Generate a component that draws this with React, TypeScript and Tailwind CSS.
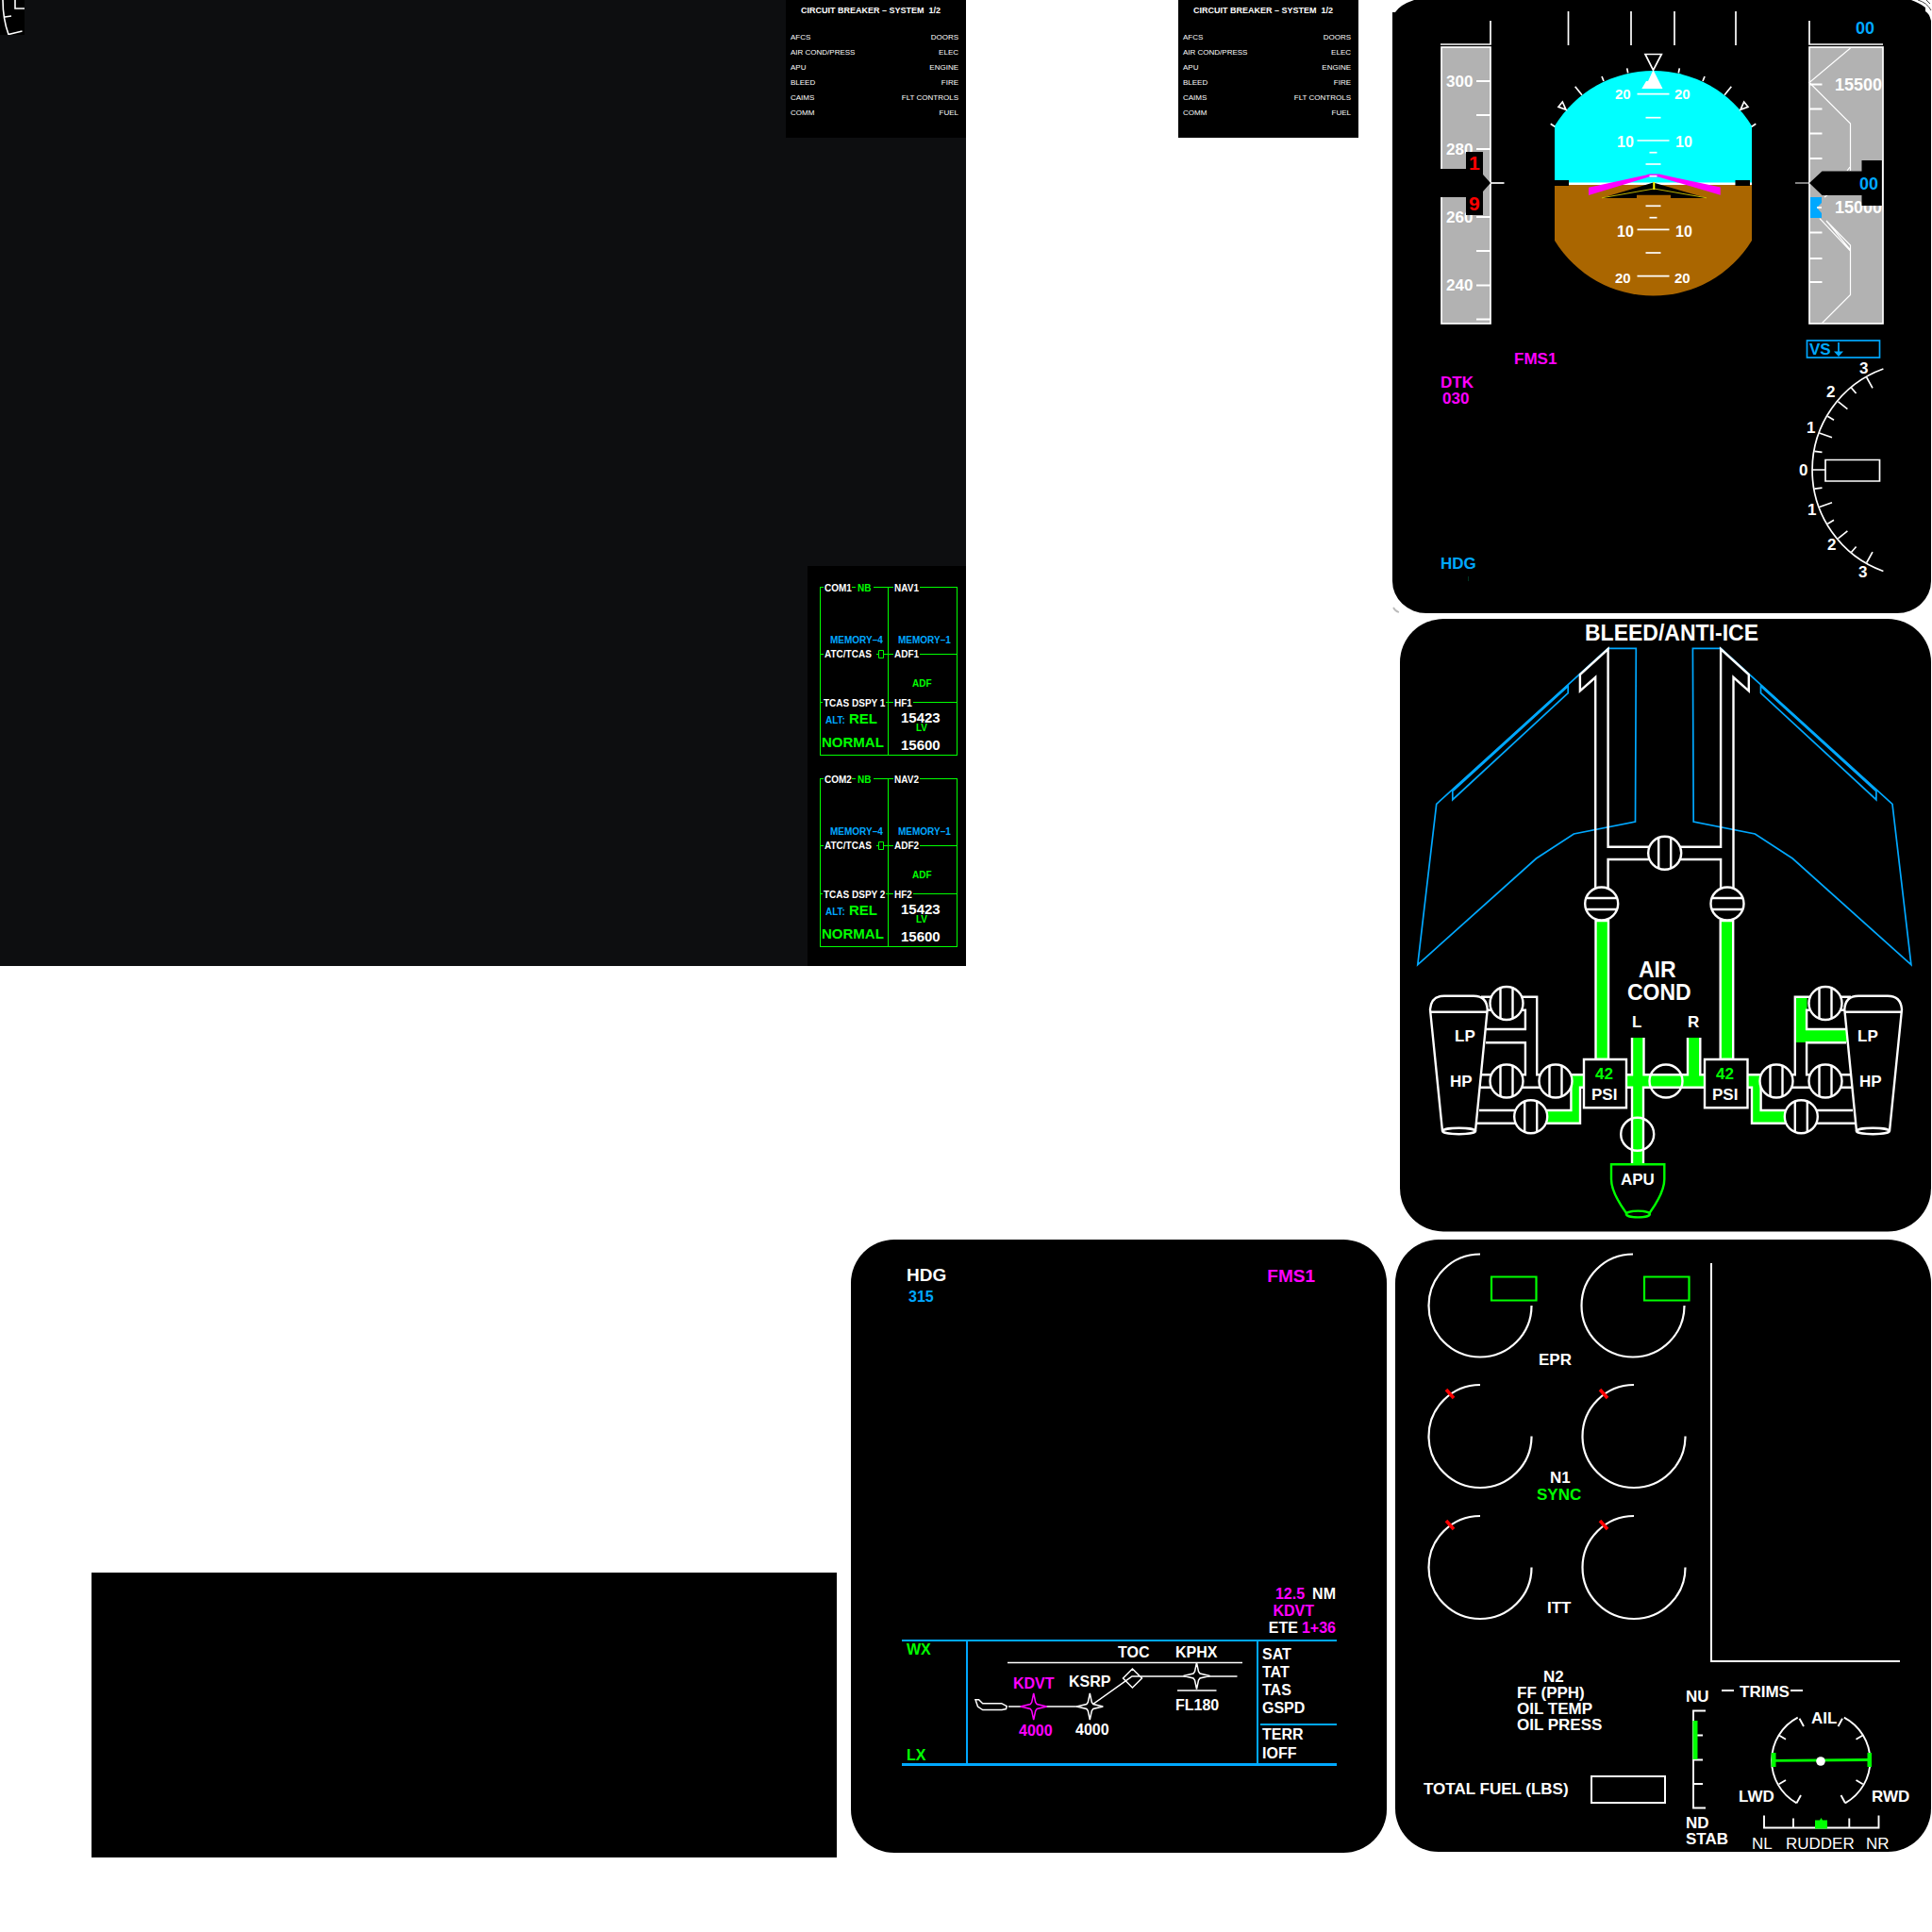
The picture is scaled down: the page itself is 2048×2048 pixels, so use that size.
import React from "react";

const BLUE = "#00a8ff";
const GREEN = "#00ff00";
const MAGENTA = "#ff00ff";

type LabelProps = {
  x: number;
  y: number;
  fill?: string;
  className?: string;
  children: React.ReactNode;
};

function Label({ x, y, fill = "#fff", className = "text-[17px] font-bold", children }: LabelProps) {
  return (
    <text x={x} y={y} fill={fill} stroke="none" className={className}>
      {children}
    </text>
  );
}

const BREAKERS: [string, string][] = [
  ["AFCS", "DOORS"],
  ["AIR COND/PRESS", "ELEC"],
  ["APU", "ENGINE"],
  ["BLEED", "FIRE"],
  ["CAIMS", "FLT CONTROLS"],
  ["COMM", "FUEL"],
];

function BreakerPanel() {
  return (
    <section className="h-[146px] w-[191px] bg-black text-white">
      <h2 className="whitespace-pre pl-4 pt-[3px] text-[9px] leading-4 font-bold">
        {"CIRCUIT BREAKER – SYSTEM  1/2"}
      </h2>
      <table className="mt-[13px] w-full text-[8px] leading-4 text-white">
        <tbody>
          {BREAKERS.map(([left, right]) => (
            <tr key={left}>
              <td className="p-0 pl-[5px] text-left">{left}</td>
              <td className="p-0 pr-2 text-right">{right}</td>
            </tr>
          ))}
        </tbody>
      </table>
    </section>
  );
}

function RadioUnit({ n }: { n: number }) {
  return (
    <section className="grid h-[179px] grid-cols-[72px_1fr] grid-rows-[70px_51px_1fr] border border-[#00ff00] text-[10px] font-bold whitespace-nowrap">
      <div className="relative border-r border-[#00ff00]">
        <span className="absolute -top-1 left-[3px] flex bg-black px-px leading-[10px] text-white">
          COM{n}
          <span className="mt-[3px] h-px w-1 bg-[#00ff00]" />
          <span className="px-[2px] text-[#00ff00]">NB</span>
        </span>
        <span className="absolute bottom-[7px] left-[10px] text-[#00a8ff]">MEMORY–4</span>
      </div>
      <div className="relative">
        <span className="absolute -top-1 left-[5px] bg-black px-px leading-[10px] text-white">NAV{n}</span>
        <span className="absolute bottom-[7px] left-[10px] text-[#00a8ff]">MEMORY–1</span>
      </div>
      <div className="relative border-r border-[#00ff00]">
        <span className="absolute top-0 left-0 h-px w-[3px] bg-[#00ff00]" />
        <span className="absolute -top-[7px] left-[3px] px-px leading-4 text-white">ATC/TCAS</span>
        <svg viewBox="0 0 12 10" className="absolute -top-[5px] right-0 h-[10px] w-3" fill="none" stroke={GREEN}>
          <path d="M0 5.500h2.500M8 5.500h4M2.500 1.500h5v8h-5z" />
        </svg>
      </div>
      <div className="relative border-t border-[#00ff00] pt-[23px] pl-[25px] leading-4 text-[#00ff00]">
        <span className="absolute -top-[5px] left-[5px] bg-black px-px leading-[10px] text-white">ADF{n}</span>
        ADF
      </div>
      <div className="relative border-t border-r border-[#00ff00] pl-[1px] text-[#00ff00]">
        <span className="absolute -top-[5px] left-[2px] bg-black px-px leading-[11px] text-white">TCAS DSPY {n}</span>
        <p className="mt-[7px] pl-1 text-[15px] leading-5">
          <span className="pr-1 text-[10px] text-[#00a8ff]">ALT:</span>REL
        </p>
        <p className="mt-[3px] text-[15px] leading-5">NORMAL</p>
      </div>
      <div className="relative border-t border-[#00ff00] pl-[13px] text-white">
        <span className="absolute -top-[5px] left-[5px] bg-black px-px leading-[11px] text-white">HF{n}</span>
        <p className="mt-[10px] text-[15px] leading-3">15423</p>
        <p className="pl-4 leading-[9px] text-[#00ff00]">LV</p>
        <p className="mt-[6px] text-[15px] leading-4">15600</p>
      </div>
    </section>
  );
}

function Bench() {
  return (
    <div className="flex aspect-square w-full justify-between bg-[#0d0e10]">
      <svg viewBox="0 0 26 37" className="h-[37px] w-[26px] bg-black" fill="none" stroke="#fff" strokeWidth="1.6">
        <path d="M3 0Q3 20 9 36.500L23.500 33M5 18L12 17M16 0V9H26" />
      </svg>
      <div className="flex flex-col items-end justify-between">
        <BreakerPanel />
        <div className="flex w-[168px] flex-col gap-6 bg-black pt-[22px] pr-[9px] pb-5 pl-[13px]">
          <RadioUnit n={1} />
          <RadioUnit n={2} />
        </div>
      </div>
    </div>
  );
}

/* Primary flight display */

function LadderLine({ y, half }: { y: number; half: number }) {
  return <path d={`M${1752.500 - half} ${y}h${half * 2}`} />;
}

function BankMarks() {
  return (
    <path d="M1724.700 72.300l1 5M1698 81l2 5M1669.700 91.700l7.300 9M1656.300 108l-4.300 5.300l8 3zM1643.700 131.300l4.500 3" />
  );
}

function VerticalSpeedTicks() {
  return (
    <path d="M1978.700 400L1985 411.300M1948.400 425.700L1958.400 433.700M1928.500 459L1942 463.700M1962.400 411L1967.600 417M1937.400 441.300L1944 445.300M1923.400 478.300L1931.500 479.300" />
  );
}

function FlightDisplay() {
  return (
    <svg viewBox="1476 0 572 656" className="block w-full" fill="none" stroke="#fff" strokeWidth="1.700" role="img" aria-label="Primary flight display">
      <path d="M1499 0Q1484 5 1479 13H1476V616A36 34 0 0 0 1512 650H2011A36 34 0 0 0 2047 616V22Q2045 14 2041 12V8Q2036 4 2026 0Z" fill="#000" stroke="none" />
      <path d="M2033 0Q2043 3 2047 11M2042 0L2046 4" stroke="#444" strokeWidth="1" />
      <path d="M1477 644Q1479 648 1483 649" stroke="#bbb" />

      <path d="M1662.500 12V48M1729 12V48M1775 12V48M1840 12V48M1580 22V47H1527M1918 22V47H1996" />

      <rect x="1528" y="50" width="52" height="293" fill="#b2b2b2" />
      <path d="M1565 86h15M1565 122h15M1565 158h15M1565 230h15M1565 266h15M1565 302.500h15M1565 338.500h15" strokeWidth="2" />
      <Label x={1533} y={92}>300</Label>
      <Label x={1533} y={164}>280</Label>
      <Label x={1533} y={236}>260</Label>
      <Label x={1533} y={308}>240</Label>
      <path d="M1526 179H1554V161H1572V185L1580 194L1572 203V228H1554V209H1526Z" fill="#000" stroke="none" />
      <path d="M1580 194h14.500" />
      <Label x={1557} y={180} fill="#f00" className="text-[21px] font-bold">1</Label>
      <Label x={1557} y={223} fill="#f00" className="text-[21px] font-bold">9</Label>

      <rect x="1918" y="50" width="78" height="293" fill="#b2b2b2" />
      <path d="M1961.500 51L1918 87.500L1961.500 131V181M1929 231.700L1961.500 266M1936 234L1961.500 260V312.500L1931.500 342.500M1936 234L1961.500 265M1958 181l3-4M1934 209l4-3" strokeWidth="1.200" />
      <path d="M1918 89.500h13.500M1918 115.500h13.500M1918 141.500h13.500M1918 168h13.500M1918 246.500h13.500M1918 274h13.500M1918 299h13.500" strokeWidth="2" />
      <Label x={1945} y={96} className="text-[18px] font-bold">15500</Label>
      <Label x={1945} y={226} className="text-[18px] font-bold">15000</Label>
      <path d="M1918 194L1931.500 181.500H1973.500V170H1996V218H1973.500V207H1931.500Z" fill="#000" stroke="none" />
      <path d="M1903 194H1918M1995.500 170V218" strokeWidth="1.200" />
      <path d="M1919 209H1931V215L1926 220L1931 226V231H1919Z" fill={BLUE} stroke="none" />
      <path d="M1926 220h5" />
      <Label x={1967} y={36} fill={BLUE} className="text-[18px] font-bold">00</Label>
      <Label x={1971} y={201} fill={BLUE} className="text-[18px] font-bold">00</Label>

      <path d="M1648 195V133.500A122.500 122.500 0 0 1 1857 133.500V195Z" fill="#00ffff" stroke="none" />
      <path d="M1648 195V255A122.500 122.500 0 0 0 1857 255V195Z" fill="#aa6600" stroke="none" />
      <path d="M1648 194.700H1857" strokeWidth="2.500" />
      <path d="M1648 191h15v6h-15zM1839.500 191h15.500v6h-15.500z" fill="#000" stroke="none" />
      <LadderLine y={99.700} half={17} />
      <LadderLine y={124.700} half={8} />
      <LadderLine y={149} half={17} />
      <LadderLine y={161.700} half={4} />
      <LadderLine y={174} half={8} />
      <LadderLine y={218.300} half={8} />
      <LadderLine y={230.700} half={4} />
      <LadderLine y={243.300} half={17} />
      <LadderLine y={268} half={8} />
      <LadderLine y={292.700} half={17} />
      <Label x={1712} y={105} className="text-[15px] font-bold">20</Label>
      <Label x={1775} y={105} className="text-[15px] font-bold">20</Label>
      <Label x={1714} y={156} className="text-[16px] font-bold">10</Label>
      <Label x={1776} y={156} className="text-[16px] font-bold">10</Label>
      <Label x={1714} y={251} className="text-[16px] font-bold">10</Label>
      <Label x={1776} y={251} className="text-[16px] font-bold">10</Label>
      <Label x={1712} y={300} className="text-[15px] font-bold">20</Label>
      <Label x={1775} y={300} className="text-[15px] font-bold">20</Label>
      <path d="M1744 57.500H1761.300L1752.500 74.500Z" />
      <path d="M1752.500 74L1762.500 94H1740.300L1745 86L1747 86Z" fill="#fff" stroke="none" />
      <BankMarks />
      <g transform="translate(3505 0) scale(-1 1)">
        <BankMarks />
      </g>
      <path d="M1684 198.700L1745 185.500L1748 184.500H1759L1763 185.500L1823.700 198.500V206.700L1758 187.500H1748L1684 207Z" fill={MAGENTA} stroke="none" />
      <LadderLine y={186.700} half={4} />
      <path d="M1752.500 193.500L1698 210H1735V206.700H1771V210H1809Z" fill="#000" stroke="none" />
      <path d="M1698 209.800L1753.300 200L1809 209.800" stroke="#d4c800" strokeWidth="0.900" />
      <path d="M1753.300 193V201" stroke="#ffff00" strokeWidth="2" />

      <Label x={1605} y={386} fill={MAGENTA}>FMS1</Label>
      <Label x={1527} y={411} fill={MAGENTA}>DTK</Label>
      <Label x={1529} y={428} fill={MAGENTA}>030</Label>
      <Label x={1527} y={603} fill={BLUE}>HDG</Label>
      <path d="M1556.500 611v5" stroke="#003322" strokeWidth="1" />

      <g stroke={BLUE}>
        <rect x="1915.500" y="361" width="77" height="18" />
        <path d="M1949 363V374" />
        <path d="M1944 372.500H1954L1949 378Z" fill={BLUE} stroke="none" />
      </g>
      <Label x={1918} y={376} fill={BLUE}>VS</Label>
      <path d="M1996.400 391A114 114 0 0 0 1996.400 605.500" />
      <VerticalSpeedTicks />
      <g transform="translate(0 996.500) scale(1 -1)">
        <VerticalSpeedTicks />
      </g>
      <path d="M1921 498H1935M1935 487.500H1992.500V510H1935Z" />
      <Label x={1971} y={396}>3</Label>
      <Label x={1936} y={421}>2</Label>
      <Label x={1915} y={459}>1</Label>
      <Label x={1907} y={504}>0</Label>
      <Label x={1916} y={546}>1</Label>
      <Label x={1937} y={583}>2</Label>
      <Label x={1970} y={612}>3</Label>
    </svg>
  );
}

/* Bleed / anti-ice synoptic */

function Valve({ x, y, open }: { x: number; y: number; open?: "h" | "v" | "none" }) {
  return (
    <g>
      <circle cx={x} cy={y} r="17.500" fill={open === "none" ? "none" : "#000"} />
      {open === "v" && <path d={`M${x - 6.500} ${y - 16}v32M${x + 6.500} ${y - 16}v32`} />}
      {open === "h" && <path d={`M${x - 16} ${y - 6}h32M${x - 16} ${y + 6}h32`} />}
    </g>
  );
}

function Wing() {
  return (
    <g>
      <path d="M1734.300 687.300H1704.600L1522.700 852.300L1502.800 1022.700L1628.500 910L1668.300 884L1733.500 871ZM1662.200 726V734.700L1539.800 847.700V838" stroke={BLUE} strokeWidth="1.700" />
      <path d="M1662 727L1540 838" stroke={BLUE} strokeWidth="2.400" />
      <path d="M1691.200 941V718L1674.900 732.300V715L1704.600 688V897.700H1765M1704.600 941V911H1765" />
      <path d="M1691.500 976h13.500v147h-13.500z" fill={GREEN} />
      <Valve x={1697.700} y={958} open="h" />
    </g>
  );
}

function Engine({ bleedActive }: { bleedActive?: boolean }) {
  return (
    <g>
      {bleedActive && <path d="M1616.500 1057H1629V1105H1574V1091H1616.500Z" fill={GREEN} stroke="none" />}
      <path d="M1665.500 1139.500H1679V1152.500H1675.500V1190.700H1636V1177H1665.500Z" fill={GREEN} stroke="none" />
      <path d="M1570 1056.700H1629.200V1139.300H1634M1575 1070.700H1616.900V1091H1575M1575 1105.300H1616.900V1139.300H1570M1569 1152.700H1640M1663 1139.300H1679M1665.400 1143V1177H1568M1679 1152.700H1675V1190.700H1565" />
      <path d="M1529 1200L1516 1070Q1517 1055.700 1531 1055.700H1562Q1576 1055.700 1576.700 1070L1564 1200Z" fill="#000" stroke="none" />
      <path d="M1529 1199L1516 1070Q1517 1055.700 1531 1055.700H1562Q1576 1055.700 1576.700 1070L1564 1199M1516.500 1072.700H1576" />
      <ellipse cx="1546.600" cy="1199" rx="17.500" ry="3.200" />
      <Valve x={1597} y={1063.500} open="v" />
      <Valve x={1597} y={1146} open="v" />
      <Valve x={1649} y={1146} open="v" />
      <Valve x={1622.700} y={1183.700} open="v" />
    </g>
  );
}

function BleedDisplay() {
  return (
    <svg viewBox="1476 656 572 658" className="block w-full" fill="none" stroke="#fff" strokeWidth="2.400" role="img" aria-label="Bleed and anti-ice synoptic">
      <rect x="1484" y="656" width="563" height="649.500" rx="46" fill="#000" stroke="none" />
      <Label x={1680} y={679} className="text-[23px] font-bold">BLEED/ANTI-ICE</Label>
      <Wing />
      <g transform="translate(3528.700 0) scale(-1 1)">
        <Wing />
      </g>
      <Valve x={1764.700} y={904.300} open="v" />

      <Label x={1737} y={1036} className="text-[23px] font-bold">AIR</Label>
      <Label x={1725} y={1060} className="text-[23px] font-bold">COND</Label>
      <Label x={1730} y={1089}>L</Label>
      <Label x={1789} y={1089}>R</Label>

      <Engine />
      <g transform="translate(3532 0) scale(-1 1)">
        <Engine bleedActive />
      </g>
      <path d="M1724 1139.500H1807V1152.500H1724ZM1730 1100H1742V1234H1730ZM1789 1100H1802V1146H1789Z" fill={GREEN} stroke="none" />
      <path d="M1724 1139.300H1730V1100M1742.500 1100V1139.300H1789V1100M1802.300 1100V1139.300H1807M1724 1152.700H1730V1233M1742 1233V1152.700H1807" />
      <Valve x={1766} y={1146} open="none" />
      <Valve x={1735.700} y={1202.300} open="none" />
      <path d="M1679 1123H1724V1174.300H1679ZM1807 1123H1852.500V1174.300H1807Z" fill="#000" />
      <g stroke={GREEN}>
        <path d="M1724 1286Q1708 1264 1708 1250V1234.300H1764.300V1250Q1764.300 1264 1748.500 1286" />
        <ellipse cx="1736.400" cy="1287" rx="12.500" ry="3.400" />
      </g>

      <Label x={1542} y={1104}>LP</Label>
      <Label x={1537} y={1152}>HP</Label>
      <Label x={1969} y={1104}>LP</Label>
      <Label x={1971} y={1152}>HP</Label>
      <Label x={1691} y={1144} fill={GREEN}>42</Label>
      <Label x={1687} y={1166}>PSI</Label>
      <Label x={1819} y={1144} fill={GREEN}>42</Label>
      <Label x={1815} y={1166}>PSI</Label>
      <Label x={1718} y={1256}>APU</Label>
    </svg>
  );
}

/* Navigation display */

function Star({ x, y, color = "#fff" }: { x: number; y: number; color?: string }) {
  return (
    <path
      transform={`translate(${x} ${y})`}
      d="M0 -14L2 -4.500L3.500 -2.500L14 0L3.500 2.500L2 4.500L0 14L-2 4.500L-3.500 2.500L-14 0L-3.500 -2.500L-2 -4.500Z"
      fill="#000"
      stroke={color}
    />
  );
}

function FlightProfile() {
  const t = "text-[16px] font-bold";
  return (
    <svg viewBox="1026 1740 306 129" className="block w-full" fill="none" stroke="#fff" strokeWidth="1.500" role="img" aria-label="Vertical flight profile">
      <path d="M1068 1762.500H1317M1248 1792H1289.500M1069 1809H1155L1200 1777H1311.500M1200.400 1769L1210.500 1779L1200.400 1789L1190.500 1779Z" />
      <path d="M1034 1801.700H1037.600L1041.700 1805.700H1061.700L1067.200 1808.700L1066.500 1811.500L1062 1812.500H1041.700L1036.500 1809Z" />
      <Star x={1095.700} y={1809} color={MAGENTA} />
      <Star x={1155.300} y={1809} />
      <Star x={1268.500} y={1776.500} />
      <Label x={1185} y={1757} className={t}>TOC</Label>
      <Label x={1246} y={1757} className={t}>KPHX</Label>
      <Label x={1074} y={1790} fill={MAGENTA} className={t}>KDVT</Label>
      <Label x={1133} y={1788} className={t}>KSRP</Label>
      <Label x={1246} y={1813} className={t}>FL180</Label>
      <Label x={1080} y={1840} fill={MAGENTA} className={t}>4000</Label>
      <Label x={1140} y={1839} className={t}>4000</Label>
    </svg>
  );
}

function NavDisplay() {
  return (
    <section className="flex h-[650px] flex-col justify-between rounded-[46px] bg-black pb-[92px] text-[16px] font-bold text-white">
      <header className="flex justify-between pt-[26px] pr-[76px] pl-[59px]">
        <div>
          <h2 className="text-[19px] leading-6">HDG</h2>
          <p className="pl-[2px] leading-[22px] text-[#00a8ff]">315</p>
        </div>
        <p className="mt-px text-[19px] leading-6 text-[#ff00ff]">FMS1</p>
      </header>
      <div className="pr-[53px] pl-[54px]">
        <div className="mb-[3px] flex flex-col items-end pr-px leading-[18px]">
          <p className="flex gap-2">
            <span className="text-[#ff00ff]">12.5</span>
            <span>NM</span>
          </p>
          <p className="pr-[23px] text-[#ff00ff]">KDVT</p>
          <p className="flex gap-1">
            <span>ETE</span>
            <span className="text-[#ff00ff]">1+36</span>
          </p>
        </div>
        <div className="grid grid-cols-[70px_1fr_85px] border-t-2 border-b-[3px] border-[#00a8ff]">
          <div className="flex flex-col justify-between border-r-2 border-[#00a8ff] pt-px pl-[5px] leading-4 text-[#00ff00]">
            <p>WX</p>
            <p>LX</p>
          </div>
          <FlightProfile />
          <div className="border-l-2 border-[#00a8ff] pt-1 pl-[2px]">
            <ul className="pl-[2px] leading-[19px]">
              <li>SAT</li>
              <li>TAT</li>
              <li>TAS</li>
              <li>GSPD</li>
            </ul>
            <ul className="mt-[7px] border-t-2 border-[#00a8ff] pl-[2px] leading-[20px]">
              <li>TERR</li>
              <li>IOFF</li>
            </ul>
          </div>
        </div>
      </div>
    </section>
  );
}

/* Engine indication display */

function Gauge({ x, y, limit }: { x: number; y: number; limit?: boolean }) {
  return (
    <g>
      <path d={`M${x} ${y - 54.500}A54.500 54.500 0 1 0 ${x + 54.500} ${y}`} />
      {limit && <path d={`M${x - 36} ${y - 49.500}l8 9`} stroke="#f00" strokeWidth="3.500" />}
    </g>
  );
}

function EngineGauges() {
  return (
    <svg viewBox="1479 1314 334 448" className="block w-full" fill="none" stroke="#fff" strokeWidth="2.200" role="img" aria-label="EPR, N1 and ITT gauges">
      <Gauge x={1569} y={1384} />
      <Gauge x={1731} y={1384} />
      <Gauge x={1569} y={1522.500} limit />
      <Gauge x={1732} y={1522.500} limit />
      <Gauge x={1569} y={1661.500} limit />
      <Gauge x={1732} y={1661.500} limit />
      <path d="M1581 1353.500H1628.500V1378.500H1581ZM1743 1353.500H1790.500V1378.500H1743Z" stroke={GREEN} />
      <Label x={1631} y={1447}>EPR</Label>
      <Label x={1643} y={1572}>N1</Label>
      <Label x={1629} y={1590} fill={GREEN}>SYNC</Label>
      <Label x={1640} y={1710}>ITT</Label>
    </svg>
  );
}

function AileronSide() {
  return (
    <path d="M1905.700 1820.700A51.500 51.500 0 0 0 1904.500 1911.300M1907.500 1821.700L1912 1830M1885.400 1839.300L1893 1843.700M1885.800 1891.300L1893 1887M1904.500 1911.300L1909 1903" />
  );
}

function Trims() {
  return (
    <svg viewBox="1785 1762 262 201" className="block w-full" fill="none" stroke="#fff" strokeWidth="1.900" role="img" aria-label="Trim positions">
      <Label x={1787} y={1804}>NU</Label>
      <Label x={1844} y={1799}>TRIMS</Label>
      <path d="M1825 1792h13M1898 1792h13" />
      <path d="M1808 1813.500H1795V1916.500H1808M1795 1839.500h10M1795 1865.500h10M1795 1891h10" />
      <path d="M1794.500 1824h5v41h-5z" fill={GREEN} stroke="none" />
      <Label x={1787} y={1938}>ND</Label>
      <Label x={1787} y={1955}>STAB</Label>
      <Label x={1920} y={1827}>AIL</Label>
      <Label x={1843} y={1910}>LWD</Label>
      <Label x={1984} y={1910}>RWD</Label>
      <AileronSide />
      <g transform="translate(3860.500 0) scale(-1 1)">
        <AileronSide />
      </g>
      <path d="M1879 1866.300L1982 1865.500" stroke={GREEN} strokeWidth="2.800" />
      <path d="M1877.700 1858h4.800v15h-4.800zM1979.500 1858h4.500v15h-4.500z" fill={GREEN} stroke="none" />
      <circle cx="1930" cy="1867" r="4.800" fill="#fff" stroke="none" />
      <path d="M1870 1924.500V1937.500H1991.500V1924.500M1901 1927.500V1937.500M1960.300 1927.500V1937.500" />
      <path d="M1924 1929.500H1929L1930.500 1927L1932 1929.500H1937V1938.500H1924Z" fill={GREEN} stroke="none" />
      <Label x={1857} y={1960} className="text-[17px] font-normal">NL</Label>
      <Label x={1893} y={1960} className="text-[17px] font-normal">RUDDER</Label>
      <Label x={1978} y={1960} className="text-[17px] font-normal">NR</Label>
    </svg>
  );
}

function EngineDisplay() {
  return (
    <section className="mr-px ml-[3px] rounded-[46px] bg-black text-[17px] font-bold text-white">
      <div className="grid grid-cols-[334fr_234fr]">
        <EngineGauges />
        <div className="mt-[25px] mr-[33px] border-b-2 border-l-2 border-white" />
      </div>
      <div className="grid grid-cols-[306fr_262fr]">
        <div>
          <ul className="pt-[7px] pl-[129px] leading-[17px]">
            <li className="pl-7">N2</li>
            <li>FF (PPH)</li>
            <li>OIL TEMP</li>
            <li>OIL PRESS</li>
          </ul>
          <div className="mt-[45px] flex items-center pl-[30px] whitespace-nowrap">
            <label htmlFor="total-fuel">TOTAL FUEL (LBS)</label>
            <output id="total-fuel" className="ml-[23px] h-[30px] w-[80px] border-2 border-white" />
          </div>
        </div>
        <Trims />
      </div>
    </section>
  );
}

export default function App() {
  return (
    <main className="grid min-h-screen w-full grid-cols-[1476fr_572fr] items-start bg-white font-['Liberation_Sans',Arial,sans-serif]">
      <div>
        <div className="grid grid-cols-[1024fr_416fr_36fr]">
          <Bench />
          <div className="flex justify-end">
            <BreakerPanel />
          </div>
        </div>
        <div className="mt-[290px] grid grid-cols-[790fr_568fr] items-start gap-[15px] pr-[6px] pl-[97px]">
          <div className="mt-[353px] h-[302px] bg-black" />
          <NavDisplay />
        </div>
      </div>
      <div>
        <FlightDisplay />
        <BleedDisplay />
        <EngineDisplay />
      </div>
    </main>
  );
}
